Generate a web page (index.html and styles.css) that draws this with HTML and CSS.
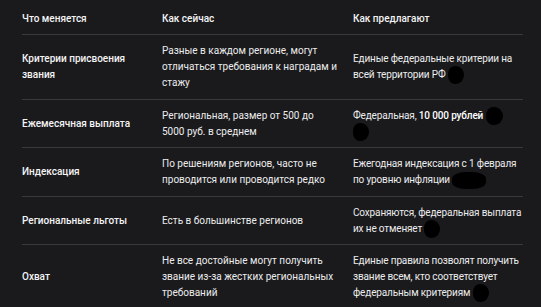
FILE: index.html
```html
<!DOCTYPE html>
<html lang="ru">
<head>
<meta charset="utf-8">
<link rel="stylesheet" href="styles.css">
</head>
<body>
<table class="cmp">
  <colgroup>
    <col class="c1"><col class="c2"><col class="c3">
  </colgroup>
  <thead>
    <tr><th>Что меняется</th><th>Как сейчас</th><th>Как предлагают</th></tr>
  </thead>
  <tbody>
    <tr>
      <th>Критерии присвоения звания</th>
      <td>Разные в каждом регионе, могут отличаться требования к наградам и стажу</td>
      <td class="new">Единые федеральные критерии на всей территории РФ <span class="blot b1"></span></td>
    </tr>
    <tr>
      <th>Ежемесячная выплата</th>
      <td>Региональная, размер от 500 до<br>5000 руб. в среднем</td>
      <td class="new">Федеральная, <b>10 000 рублей</b> <span class="blot b2"></span><br><span class="blot b3"></span></td>
    </tr>
    <tr>
      <th>Индексация</th>
      <td>По решениям регионов, часто не проводится или проводится редко</td>
      <td class="new">Ежегодная индексация с 1 февраля по уровню инфляции <span class="blot b4"></span></td>
    </tr>
    <tr>
      <th>Региональные льготы</th>
      <td>Есть в большинстве регионов</td>
      <td class="new">Сохраняются, федеральная выплата их не отменяет <span class="blot b5"></span></td>
    </tr>
    <tr>
      <th>Охват</th>
      <td>Не все достойные могут получить звание из-за жестких региональных требований</td>
      <td class="new">Единые правила позволят получить звание всем, кто соответствует федеральным критериям <span class="blot b6"></span></td>
    </tr>
  </tbody>
</table>
</body>
</html>
```

FILE: styles.css
```css
html, body {
  margin: 0;
  background: #1a1a1d;
}
body {
  padding: 3px 18px 0 22px;
  font-family: Roboto, "Liberation Sans", sans-serif;
  font-size: 10px;
  line-height: 16px;
  color: #ececec;
}
.cmp {
  width: 501px;
  border-collapse: collapse;
  table-layout: fixed;
}
.c1 { width: 140px; }
.c2 { width: 191px; }
.c3 { width: 170px; }
.cmp th, .cmp td {
  padding: 8px 12px 7.5px 0;
  text-align: left;
  vertical-align: middle;
  border-bottom: 1px solid #3a3a3d;
}
.cmp thead th { padding-bottom: 7px; }
.cmp th:last-child, .cmp td:last-child { padding-right: 0; }
.cmp th { font-weight: 500; color: #f4f4f4; }
.cmp b { font-weight: 500; color: #fff; }
.new { letter-spacing: -0.15px; }
.blot {
  display: inline-block;
  vertical-align: middle;
  background: #000;
  width: 16px;
  height: 18px;
  margin: -2px 0;
  border-radius: 45% 50% 50% 45%;
}
.b2 { width: 17px; }
.b3 { width: 16px; }
.b4 { width: 34px; height: 17px; border-radius: 40%; }
```
